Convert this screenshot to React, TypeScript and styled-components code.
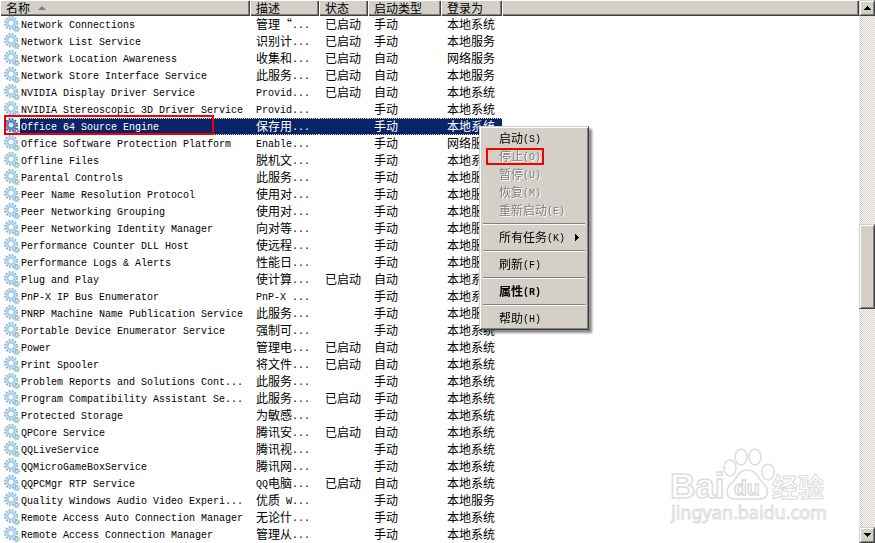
import React from "react";
import styled, { createGlobalStyle, css } from "styled-components";

const FACE = "#d4d0c8";
const NAVY = "#0a246a";
const DOT = "#f5db95";

const GlobalStyle = createGlobalStyle`
  * { box-sizing: border-box; }
  body {
    margin: 0;
    background: #fff;
    color: #000;
    font: 12px/16px "Noto Sans CJK SC", sans-serif;
  }
  button { font: inherit; color: inherit; margin: 0; }
`;

const raised = css`
  background: ${FACE};
  border: 1px solid;
  border-color: ${FACE} #404040 #404040 ${FACE};
  box-shadow: inset 1px 1px 0 #fff, inset -1px -1px 0 #808080;
`;

const Window = styled.main`
  display: flex;
  height: 100vh;
  overflow: hidden;
  position: relative;
`;

const ListPane = styled.section`
  flex: 1;
  min-width: 0;
  overflow: hidden;
`;

const Table = styled.table`
  width: 100%;
  table-layout: fixed;
  border-collapse: collapse;
`;

const Col = styled.col<{ $w?: number }>`
  ${(p) => (p.$w ? `width: ${p.$w}px;` : "")}
`;

const HeadCell = styled.th`
  height: 16px;
  padding: 0;
  font-weight: normal;
  text-align: left;
  background: ${FACE};
  box-shadow: inset 1px 1px 0 #fff, inset -1px -1px 0 #404040, inset -2px -2px 0 #808080;
`;

const HeadButton = styled.button`
  display: flex;
  align-items: center;
  gap: 8px;
  width: 100%;
  height: 16px;
  padding: 0 6px;
  border: 0;
  background: none;
  line-height: 16px;
  white-space: nowrap;
`;

const Row = styled.tr<{ $selected?: boolean }>`
  height: 17px;
  line-height: 16px;
  color: ${(p) => (p.$selected ? "#fff" : "#000")};
`;

const dotted = css`
  background-color: ${NAVY};
  background-image: repeating-linear-gradient(90deg, ${DOT} 0 1px, ${NAVY} 1px 2px),
    repeating-linear-gradient(90deg, ${DOT} 0 1px, ${NAVY} 1px 2px);
  background-size: 100% 1px;
  background-position: top, bottom;
  background-repeat: no-repeat;
`;

const Cell = styled.td<{ $selected?: boolean }>`
  height: 17px;
  padding: 0 0 0 6px;
  overflow: hidden;
  white-space: pre;
  vertical-align: top;
  ${(p) => p.$selected && dotted}
`;

const NameCell = styled.td`
  height: 17px;
  padding: 0 0 0 4px;
`;

const NameBox = styled.div`
  display: flex;
  align-items: center;
  position: relative;
  height: 17px;
`;

const Label = styled.span<{ $selected?: boolean }>`
  flex: 1;
  height: 17px;
  padding-left: 1px;
  overflow: hidden;
  white-space: pre;
  ${(p) => p.$selected && dotted}
`;

const Latin = styled.span`
  font-family: "Liberation Mono", monospace;
  font-size: 10px;
  line-height: 10px;
  vertical-align: 1px;
`;

const GearSvg = styled.svg`
  display: block;
  flex: none;
  width: 16px;
  height: 17px;
`;

const ScrollBar = styled.div`
  display: flex;
  flex-direction: column;
  flex: none;
  width: 16px;
  background: repeating-conic-gradient(${FACE} 0 25%, #fff 0 50%) 0 0 / 2px 2px;
`;

const ArrowButton = styled.button`
  ${raised}
  display: flex;
  align-items: center;
  justify-content: center;
  width: 16px;
  height: 16px;
  padding: 0;
`;

const Track = styled.div`
  display: grid;
  flex: 1;
  grid-template-rows: 208fr 85fr 218fr;
`;

const Thumb = styled.div`
  ${raised}
  grid-row: 2;
`;

const Menu = styled.div`
  ${raised}
  position: absolute;
  z-index: 2;
  left: 479px;
  top: 126px;
  width: 110px;
  padding: 2px;
  filter: drop-shadow(3px 3px 1px rgba(0, 0, 0, 0.45));
`;

const MenuItem = styled.button<{ $strong?: boolean }>`
  display: flex;
  align-items: center;
  justify-content: space-between;
  position: relative;
  width: 100%;
  height: 18px;
  padding: 0 7px 0 17px;
  border: 0;
  background: none;
  line-height: 16px;
  white-space: nowrap;
  font-weight: ${(p) => (p.$strong ? 700 : 400)};
  &:disabled {
    color: #808080;
    text-shadow: 1px 1px 0 #fff;
  }
`;

const MenuRule = styled.hr`
  height: 2px;
  margin: 4px 1px 3px;
  border: 0;
  border-top: 1px solid #808080;
  border-bottom: 1px solid #fff;
`;

const Mark = styled.span`
  position: absolute;
  z-index: 1;
  border: 2px solid #f00000;
  pointer-events: none;
`;

const RowMark = styled(Mark)`
  left: 0;
  top: -3px;
  width: 210px;
  height: 20px;
`;

const MenuMark = styled(Mark)`
  left: 4px;
  top: 1px;
  width: 58px;
  height: 17px;
`;

const Watermark = styled.svg`
  position: absolute;
  right: 45px;
  bottom: 12px;
  width: 160px;
  height: 88px;
  pointer-events: none;
`;

function Text({ children }: { children: string }) {
  const runs = children.match(/[\x20-\x7e]+|[^\x20-\x7e]+/g) ?? [];
  return (
    <span>
      {runs.map((run, i) =>
        /^[\x20-\x7e]/.test(run) ? <Latin key={i}>{run}</Latin> : <React.Fragment key={i}>{run}</React.Fragment>
      )}
    </span>
  );
}

function Gear({ selected }: { selected?: boolean }) {
  const ring = selected ? "#6c93c0" : "#b5d9f0";
  const edge = selected ? "#2c5592" : "#7fb0d2";
  const small = selected ? "#4a74a8" : "#8db6d2";
  return (
    <GearSvg viewBox="0 0 16 17" aria-hidden="true">
      <circle cx="7" cy="7" r="6" fill="none" stroke={edge} strokeWidth="2" strokeDasharray="1.7 1.44" />
      <circle cx="7" cy="7" r="4.3" fill="none" stroke={ring} strokeWidth="2.4" />
      <circle cx="7" cy="7" r="3.1" fill={selected ? "#dce6f4" : "#fff"} stroke={edge} strokeWidth="0.8" />
      <circle cx="12.6" cy="13" r="2.6" fill="none" stroke={small} strokeWidth="1.4" strokeDasharray="1.1 0.94" />
      <circle cx="12.6" cy="13" r="1.5" fill="#e4f0f8" stroke={small} strokeWidth="1.1" />
    </GearSvg>
  );
}

type Service = [name: string, desc: string, started: boolean, auto: boolean, account: string];

const SYS = "本地系统";
const LOC = "本地服务";
const NET = "网络服务";

const services: Service[] = [
  ["Network Connections", "管理“...", true, false, SYS],
  ["Network List Service", "识别计...", true, false, LOC],
  ["Network Location Awareness", "收集和...", true, true, NET],
  ["Network Store Interface Service", "此服务...", true, true, LOC],
  ["NVIDIA Display Driver Service", "Provid...", true, true, SYS],
  ["NVIDIA Stereoscopic 3D Driver Service", "Provid...", false, false, SYS],
  ["Office 64 Source Engine", "保存用...", false, false, SYS],
  ["Office Software Protection Platform", "Enable...", false, false, NET],
  ["Offline Files", "脱机文...", false, false, SYS],
  ["Parental Controls", "此服务...", false, false, LOC],
  ["Peer Name Resolution Protocol", "使用对...", false, false, LOC],
  ["Peer Networking Grouping", "使用对...", false, false, LOC],
  ["Peer Networking Identity Manager", "向对等...", false, false, LOC],
  ["Performance Counter DLL Host", "使远程...", false, false, LOC],
  ["Performance Logs & Alerts", "性能日...", false, false, LOC],
  ["Plug and Play", "使计算...", true, true, SYS],
  ["PnP-X IP Bus Enumerator", "PnP-X ...", false, false, SYS],
  ["PNRP Machine Name Publication Service", "此服务...", false, false, LOC],
  ["Portable Device Enumerator Service", "强制可...", false, false, SYS],
  ["Power", "管理电...", true, true, SYS],
  ["Print Spooler", "将文件...", true, true, SYS],
  ["Problem Reports and Solutions Cont...", "此服务...", false, false, SYS],
  ["Program Compatibility Assistant Se...", "此服务...", true, false, SYS],
  ["Protected Storage", "为敏感...", false, false, SYS],
  ["QPCore Service", "腾讯安...", true, true, SYS],
  ["QQLiveService", "腾讯视...", false, false, SYS],
  ["QQMicroGameBoxService", "腾讯网...", false, false, SYS],
  ["QQPCMgr RTP Service", "QQ电脑...", true, true, SYS],
  ["Quality Windows Audio Video Experi...", "优质 W...", false, false, LOC],
  ["Remote Access Auto Connection Manager", "无论什...", false, false, SYS],
  ["Remote Access Connection Manager", "管理从...", false, false, SYS],
];

const SELECTED = "Office 64 Source Engine";

const columns = [
  { title: "名称", width: 250 },
  { title: "描述", width: 69 },
  { title: "状态", width: 49 },
  { title: "启动类型", width: 73 },
  { title: "登录为", width: 61 },
];

export default function App() {
  return (
    <Window lang="zh-CN">
      <GlobalStyle />
      <ListPane>
        <Table>
          <colgroup>
            {columns.map((c) => (
              <Col key={c.title} $w={c.width} />
            ))}
            <Col />
          </colgroup>
          <thead>
            <tr>
              {columns.map((c, i) => (
                <HeadCell key={c.title} scope="col">
                  <HeadButton type="button">
                    {c.title}
                    {i === 0 && (
                      <svg width="8" height="4" viewBox="0 0 8 4" aria-hidden="true">
                        <path d="M4 0L8 4H0Z" fill="#808080" />
                      </svg>
                    )}
                  </HeadButton>
                </HeadCell>
              ))}
              <HeadCell as="td" />
            </tr>
          </thead>
          <tbody>
            {services.map(([name, desc, started, auto, account]) => {
              const sel = name === SELECTED;
              return (
                <Row key={name} $selected={sel}>
                  <NameCell>
                    <NameBox>
                      <Gear selected={sel} />
                      <Label $selected={sel}>
                        <Text>{name}</Text>
                      </Label>
                      {sel && <RowMark />}
                    </NameBox>
                  </NameCell>
                  <Cell $selected={sel}>
                    <Text>{desc}</Text>
                  </Cell>
                  <Cell $selected={sel}>{started ? "已启动" : ""}</Cell>
                  <Cell $selected={sel}>{auto ? "自动" : "手动"}</Cell>
                  <Cell $selected={sel}>{account}</Cell>
                </Row>
              );
            })}
          </tbody>
        </Table>
      </ListPane>

      <ScrollBar>
        <ArrowButton type="button" aria-label="向上滚动">
          <svg width="7" height="4" viewBox="0 0 7 4" shapeRendering="crispEdges">
            <path d="M3 0h1v1h1v1h1v1h1v1H0V3h1V2h1V1h1Z" />
          </svg>
        </ArrowButton>
        <Track>
          <Thumb />
        </Track>
        <ArrowButton type="button" aria-label="向下滚动">
          <svg width="7" height="4" viewBox="0 0 7 4" shapeRendering="crispEdges">
            <path d="M0 0h7v1H6v1H5v1H4v1H3V3H2V2H1V1H0Z" />
          </svg>
        </ArrowButton>
      </ScrollBar>

      <Watermark viewBox="0 0 160 88" aria-hidden="true">
        <g fill="#fff" stroke="#dcdcdc" strokeWidth="1.5">
          <ellipse cx="71" cy="14" rx="6" ry="8" />
          <ellipse cx="85" cy="14" rx="6" ry="8" />
          <ellipse cx="60" cy="25" rx="6" ry="8" />
          <ellipse cx="98" cy="29" rx="6" ry="8" />
          <path d="M77 27C68 27 67 36 61 41C54 47 57 56 65 56H90C98 56 100 47 94 41C88 36 87 27 77 27Z" />
          <g fontFamily="Liberation Sans" fontWeight="700">
            <text x="0" y="55" fontSize="35">Bai</text>
            <text x="64" y="52" fontSize="21">du</text>
            <text x="102" y="54" fontSize="26" strokeWidth="1" fontFamily="Noto Sans CJK SC">经验</text>
          </g>
          <text x="1" y="76" fontSize="18" strokeWidth="1" fontFamily="Noto Sans">jingyan.baidu.com</text>
        </g>
      </Watermark>

      <Menu role="menu">
        <MenuItem type="button" role="menuitem"><Text>启动(S)</Text></MenuItem>
        <MenuItem type="button" role="menuitem" disabled>
          <Text>停止(O)</Text>
          <MenuMark />
        </MenuItem>
        <MenuItem type="button" role="menuitem" disabled><Text>暂停(U)</Text></MenuItem>
        <MenuItem type="button" role="menuitem" disabled><Text>恢复(M)</Text></MenuItem>
        <MenuItem type="button" role="menuitem" disabled><Text>重新启动(E)</Text></MenuItem>
        <MenuRule />
        <MenuItem type="button" role="menuitem" aria-haspopup="menu">
          <Text>所有任务(K)</Text>
          <svg width="4" height="7" viewBox="0 0 4 7" shapeRendering="crispEdges">
            <path d="M0 0h1v1h1v1h1v1h1v1H3v1H2v1H1v1H0Z" />
          </svg>
        </MenuItem>
        <MenuRule />
        <MenuItem type="button" role="menuitem"><Text>刷新(F)</Text></MenuItem>
        <MenuRule />
        <MenuItem type="button" role="menuitem" $strong><Text>属性(R)</Text></MenuItem>
        <MenuRule />
        <MenuItem type="button" role="menuitem"><Text>帮助(H)</Text></MenuItem>
      </Menu>
    </Window>
  );
}
